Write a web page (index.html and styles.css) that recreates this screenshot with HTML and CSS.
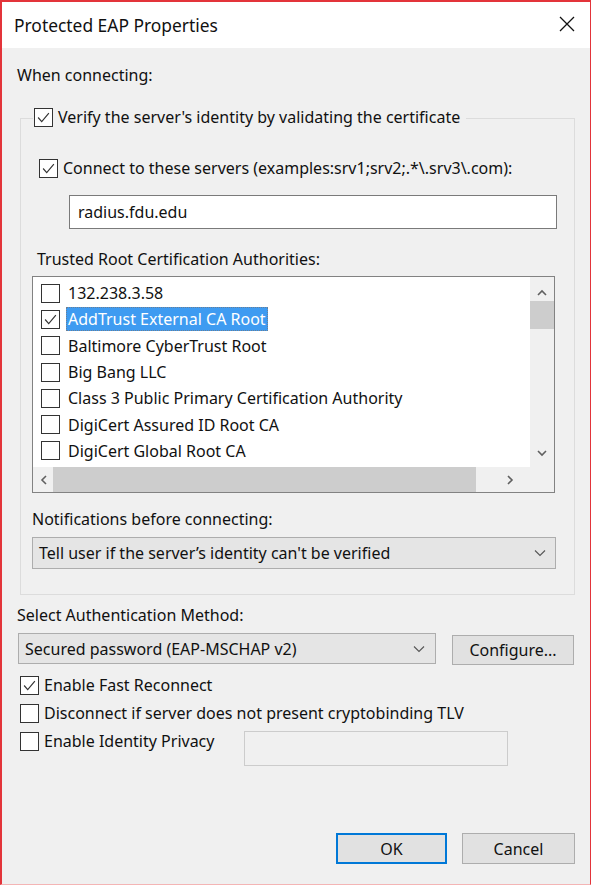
FILE: index.html
```html
<!DOCTYPE html>
<html>
<head>
<meta charset="utf-8">
<title>Protected EAP Properties</title>
<link rel="stylesheet" href="styles.css">
</head>
<body>
<div class="window">
  <div class="titlebar">
    <span class="title">Protected EAP Properties</span>
    <svg class="close" width="16" height="16" viewBox="0 0 16 16"><path d="M1 1 L15 15 M15 1 L1 15" stroke="#111" stroke-width="1.3" fill="none"/></svg>
  </div>
  <div class="content">
    <div class="label">When connecting:</div>
    <div class="group">
      <div class="legend row">
        <span class="cb checked"><svg viewBox="0 0 19 19"><path d="M3.5 9.5 L7.5 14 L15.5 4.5" stroke="#333" stroke-width="1.3" fill="none"/></svg></span>
        <span>Verify the server's identity by validating the certificate</span>
      </div>
      <div class="row connect">
        <span class="cb checked"><svg viewBox="0 0 19 19"><path d="M3.5 9.5 L7.5 14 L15.5 4.5" stroke="#333" stroke-width="1.3" fill="none"/></svg></span>
        <span>Connect to these servers (examples:srv1;srv2;.*\.srv3\.com):</span>
      </div>
      <div class="textfield servers">radius.fdu.edu</div>
      <div class="label trusted">Trusted Root Certification Authorities:</div>
      <div class="listbox">
        <div class="items">
          <div class="item"><span class="cb"></span><span class="itext">132.238.3.58</span></div>
          <div class="item"><span class="cb checked"><svg viewBox="0 0 19 19"><path d="M3.5 9.5 L7.5 14 L15.5 4.5" stroke="#333" stroke-width="1.3" fill="none"/></svg></span><span class="itext selected">AddTrust External CA Root</span></div>
          <div class="item"><span class="cb"></span><span class="itext">Baltimore CyberTrust Root</span></div>
          <div class="item"><span class="cb"></span><span class="itext">Big Bang LLC</span></div>
          <div class="item"><span class="cb"></span><span class="itext">Class 3 Public Primary Certification Authority</span></div>
          <div class="item"><span class="cb"></span><span class="itext">DigiCert Assured ID Root CA</span></div>
          <div class="item"><span class="cb"></span><span class="itext">DigiCert Global Root CA</span></div>
        </div>
        <div class="vscroll">
          <svg class="arrow" width="12" height="8" viewBox="0 0 12 8"><path d="M2 6 L6 2 L10 6" stroke="#606060" stroke-width="1.6" fill="none"/></svg>
          <div class="vthumb"></div>
          <div class="vtrack"></div>
          <svg class="arrow" width="12" height="8" viewBox="0 0 12 8"><path d="M2 2 L6 6 L10 2" stroke="#606060" stroke-width="1.6" fill="none"/></svg>
        </div>
        <div class="hscroll">
          <svg class="arrow" width="8" height="12" viewBox="0 0 8 12"><path d="M6 2 L2 6 L6 10" stroke="#606060" stroke-width="1.6" fill="none"/></svg>
          <div class="hthumb"></div>
          <svg class="arrow" width="8" height="12" viewBox="0 0 8 12"><path d="M2 2 L6 6 L2 10" stroke="#606060" stroke-width="1.6" fill="none"/></svg>
        </div>
        <div class="corner"></div>
      </div>
      <div class="label notif">Notifications before connecting:</div>
      <div class="select notifsel">
        <span>Tell user if the server’s identity can't be verified</span>
        <svg width="12" height="8" viewBox="0 0 12 8"><path d="M1 1.5 L6 6.5 L11 1.5" stroke="#555" stroke-width="1.1" fill="none"/></svg>
      </div>
    </div>
    <div class="label method">Select Authentication Method:</div>
    <div class="methodrow">
      <div class="select methodsel">
        <span>Secured password (EAP-MSCHAP v2)</span>
        <svg width="12" height="8" viewBox="0 0 12 8"><path d="M1 1.5 L6 6.5 L11 1.5" stroke="#555" stroke-width="1.1" fill="none"/></svg>
      </div>
      <div class="button configure">Configure...</div>
    </div>
    <div class="options">
      <div class="row">
        <span class="cb checked"><svg viewBox="0 0 19 19"><path d="M3.5 9.5 L7.5 14 L15.5 4.5" stroke="#333" stroke-width="1.3" fill="none"/></svg></span>
        <span>Enable Fast Reconnect</span>
      </div>
      <div class="row">
        <span class="cb"></span>
        <span>Disconnect if server does not present cryptobinding TLV</span>
      </div>
      <div class="row identity">
        <span class="cb"></span>
        <span class="idlabel">Enable Identity Privacy</span>
        <div class="textfield disabled"></div>
      </div>
    </div>
    <div class="buttons">
      <div class="button ok">OK</div>
      <div class="button cancel">Cancel</div>
    </div>
  </div>
</div>
</body>
</html>
```
FILE: styles.css
```css
* { box-sizing: border-box; }
html, body { margin: 0; padding: 0; background: #fff; }
body {
  font-family: "Noto Sans", "Open Sans", sans-serif;
  font-size: 16px;
  color: #111;
}
.window {
  width: 591px;
  height: 885px;
  border: 1px solid #e3343a;
  border-left: 2px solid #e3343a;
  border-top: 2px solid #e3343a;
  border-bottom-color: #f4b5b5;
  background: #f0f0f0;
  display: flex;
  flex-direction: column;
}
.titlebar {
  height: 46px;
  background: #fff;
  display: flex;
  align-items: center;
  justify-content: space-between;
  padding: 0 15px 0 12px;
}
.title { font-size: 17.4px; color: #111; margin-top: -1px; }
.close { margin-top: -3px; }
.content {
  flex: 1;
  display: flex;
  flex-direction: column;
  padding: 17px 15px 0 15px;
}
.label { line-height: 20px; height: 20px; white-space: nowrap; }
.row { display: flex; align-items: center; height: 20px; white-space: nowrap; }
.row .cb { margin-right: 5px; }
.cb {
  width: 19px; height: 19px;
  border: 1px solid #333;
  background: #fff;
  flex: none;
  display: inline-flex;
}
.cb svg { width: 17px; height: 17px; }
.group {
  margin: 33px 0 0 3px;
  border: 1px solid #dcdcdc;
  display: flex;
  flex-direction: column;
  padding: 0 19px 25px 11px;
}
.legend {
  margin: -12px 0 0 1px;
  align-self: flex-start;
  background: #f0f0f0;
  padding: 0 6px 0 1px;
}
.connect { margin: 31px 0 0 7px; }
.textfield {
  background: #fff;
  border: 1px solid #7a7a7a;
  height: 34px;
  line-height: 32px;
  padding-left: 8px;
}
.servers { margin: 17px -2px 0 37px; }
.trusted { margin: 20px 0 0 5px; }
.listbox {
  margin-top: 7px;
  height: 217px;
  border: 1px solid #828282;
  background: #fff;
  display: grid;
  grid-template-columns: 1fr 24px;
  grid-template-rows: 1fr 25px;
}
.items { padding: 3px 0 0 8px; overflow: hidden; }
.item { height: 26.3px; display: flex; align-items: center; white-space: nowrap; }
.item .cb { margin-right: 6px; }
.itext { padding: 0 2px; line-height: 24px; height: 24px; }
.itext.selected { background: #3e9bf1; color: #fff; outline: 1px dotted #6a7f96; outline-offset: -1px; }
.vscroll {
  background: #f0f0f0;
  display: flex;
  flex-direction: column;
  align-items: center;
  padding: 12px 0 10px;
}
.vthumb { width: 100%; height: 28px; background: #cdcdcd; margin-top: 4px; }
.vtrack { flex: 1; }
.hscroll {
  background: #f0f0f0;
  display: flex;
  align-items: center;
  padding: 0 10px 0 7px;
}
.hthumb { height: 100%; width: 423px; background: #cdcdcd; margin: 0 30px 0 5px; }
.corner { background: #f0f0f0; }
.notif { margin-top: 16px; }
.select {
  height: 32px;
  background: #e5e5e5;
  border: 1px solid #adadad;
  display: flex;
  align-items: center;
  justify-content: space-between;
  padding: 0 9px 0 6px;
  white-space: nowrap;
}
.notifsel { margin: 8px -1px 0 0; }
.method { margin-top: 10px; }
.methodrow { display: flex; align-items: flex-start; margin-top: 8px; }
.methodsel { width: 418px; margin-left: 1px; height: 31px; padding-right: 10px; }
.button {
  background: #e1e1e1;
  border: 1px solid #adadad;
  display: flex;
  align-items: center;
  justify-content: center;
  height: 30px;
}
.configure { width: 122px; margin: 2px 0 0 16px; }
.options { display: flex; flex-direction: column; gap: 8px; margin: 10px 0 0 3px; }
.idlabel { width: 200px; }
.textfield.disabled {
  width: 264px; height: 35px;
  background: #f0f0f0;
  border: 1px solid #cccccc;
  margin-top: 14px;
}
.buttons { display: flex; justify-content: flex-end; gap: 15px; margin-top: 82px; }
.ok { width: 111px; height: 31px; border: 2px solid #0078d7; }
.cancel { width: 113px; height: 31px; }
```
